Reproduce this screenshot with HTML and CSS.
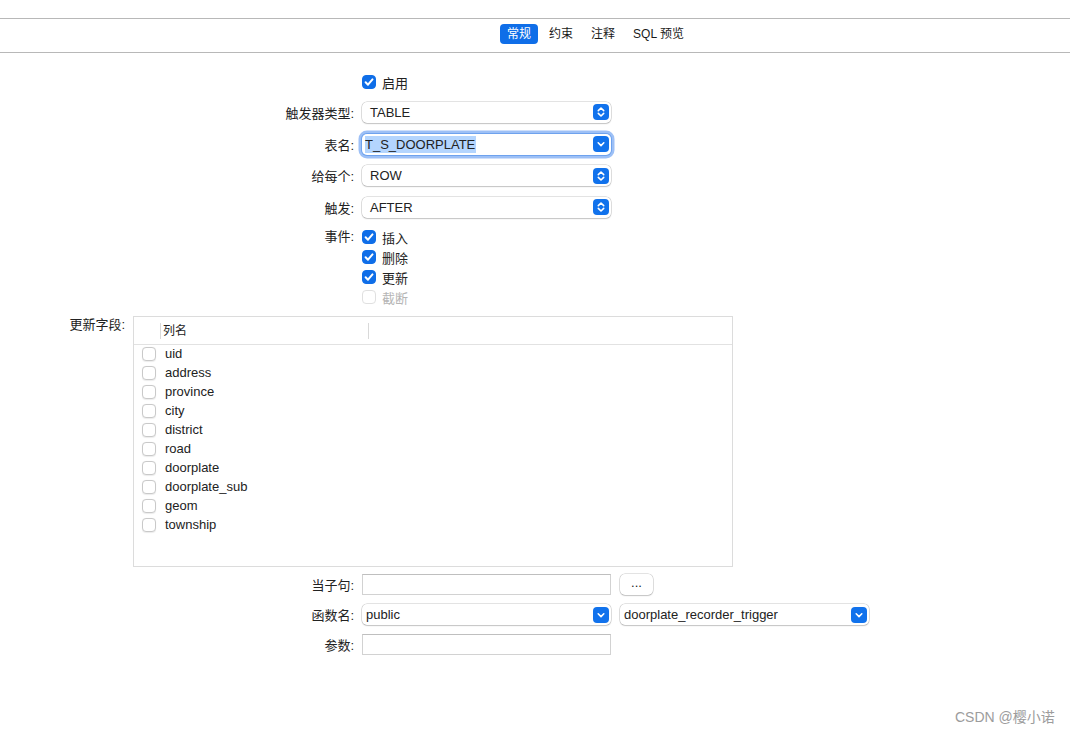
FILE: index.html
```html
<!DOCTYPE html>
<html lang="zh-CN">
<head>
<meta charset="utf-8">
<title>触发器</title>
<link rel="stylesheet" href="styles.css">
</head>
<body>
<div class="tabbar">
  <div class="tab active">常规</div>
  <div class="tab">约束</div>
  <div class="tab">注释</div>
  <div class="tab">SQL 预览</div>
</div>

<div class="form">
  <div class="row row-check">
    <div class="lbl"></div>
    <label class="cb"><span class="box on"><svg viewBox="0 0 14 14"><path d="M3.6 7.3 L6 9.7 L10.5 4.4"/></svg></span><span>启用</span></label>
  </div>

  <div class="row">
    <div class="lbl">触发器类型:</div>
    <div class="select"><span class="val">TABLE</span><span class="btn"><svg viewBox="0 0 16 16"><path d="M5.3 6.6 L8 4 L10.7 6.6 M5.3 9.4 L8 12 L10.7 9.4"/></svg></span></div>
  </div>

  <div class="row">
    <div class="lbl">表名:</div>
    <div class="select combo focus"><span class="val"><span class="sel">T_S_DOORPLATE</span></span><span class="btn"><svg viewBox="0 0 16 16"><path d="M5.2 6.8 L8 9.6 L10.8 6.8"/></svg></span></div>
  </div>

  <div class="row row-short">
    <div class="lbl">给每个:</div>
    <div class="select"><span class="val">ROW</span><span class="btn"><svg viewBox="0 0 16 16"><path d="M5.3 6.6 L8 4 L10.7 6.6 M5.3 9.4 L8 12 L10.7 9.4"/></svg></span></div>
  </div>

  <div class="row">
    <div class="lbl">触发:</div>
    <div class="select"><span class="val">AFTER</span><span class="btn"><svg viewBox="0 0 16 16"><path d="M5.3 6.6 L8 4 L10.7 6.6 M5.3 9.4 L8 12 L10.7 9.4"/></svg></span></div>
  </div>

  <div class="events">
    <div class="lbl lbl-top">事件:</div>
    <div class="checks">
      <label class="cb"><span class="box on"><svg viewBox="0 0 14 14"><path d="M3.6 7.3 L6 9.7 L10.5 4.4"/></svg></span><span>插入</span></label>
      <label class="cb"><span class="box on"><svg viewBox="0 0 14 14"><path d="M3.6 7.3 L6 9.7 L10.5 4.4"/></svg></span><span>删除</span></label>
      <label class="cb"><span class="box on"><svg viewBox="0 0 14 14"><path d="M3.6 7.3 L6 9.7 L10.5 4.4"/></svg></span><span>更新</span></label>
      <label class="cb disabled"><span class="box"></span><span>截断</span></label>
    </div>
  </div>

  <div class="fields">
    <div class="lbl-fields">更新字段:</div>
    <div class="table">
      <div class="thead">
        <div class="th-check"></div>
        <div class="th-name">列名</div>
      </div>
      <div class="tbody">
        <div class="trow"><span class="box"></span><span>uid</span></div>
        <div class="trow"><span class="box"></span><span>address</span></div>
        <div class="trow"><span class="box"></span><span>province</span></div>
        <div class="trow"><span class="box"></span><span>city</span></div>
        <div class="trow"><span class="box"></span><span>district</span></div>
        <div class="trow"><span class="box"></span><span>road</span></div>
        <div class="trow"><span class="box"></span><span>doorplate</span></div>
        <div class="trow"><span class="box"></span><span>doorplate_sub</span></div>
        <div class="trow"><span class="box"></span><span>geom</span></div>
        <div class="trow"><span class="box"></span><span>township</span></div>
      </div>
    </div>
  </div>

  <div class="brow first">
    <div class="lbl">当子句:</div>
    <div class="input"></div>
    <div class="dots">...</div>
  </div>

  <div class="brow">
    <div class="lbl">函数名:</div>
    <div class="select combo"><span class="val">public</span><span class="btn"><svg viewBox="0 0 16 16"><path d="M5.2 6.8 L8 9.6 L10.8 6.8"/></svg></span></div>
    <div class="select combo second"><span class="val">doorplate_recorder_trigger</span><span class="btn"><svg viewBox="0 0 16 16"><path d="M5.2 6.8 L8 9.6 L10.8 6.8"/></svg></span></div>
  </div>

  <div class="brow">
    <div class="lbl">参数:</div>
    <div class="input"></div>
  </div>
</div>

<div class="watermark">CSDN @樱小诺</div>
</body>
</html>
```

FILE: styles.css
```css
* { box-sizing: border-box; }

body {
  margin: 0;
  width: 1070px;
  height: 733px;
  position: relative;
  overflow: hidden;
  background: #fff;
  font-family: "Liberation Sans", "Noto Sans CJK SC", sans-serif;
  font-size: 13px;
  color: #222;
}

/* tab bar */
.tabbar {
  margin-top: 18px;
  height: 35px;
  border-top: 1px solid #b8b8b8;
  border-bottom: 1px solid #b8b8b8;
  display: flex;
  align-items: flex-start;
  gap: 4px;
  padding: 5px 0 0 500px;
}
.tab {
  height: 20px;
  line-height: 20px;
  padding: 0 7px;
  font-size: 12px;
  border-radius: 4px;
  color: #1a1a1a;
}
.tab.active {
  background: #0f6ee8;
  color: #fff;
}

/* form */
.form {
  display: flex;
  flex-direction: column;
  padding-top: 19px;
}
.row {
  display: flex;
  align-items: center;
  height: 32px;
}
.row-short { height: 31px; }
.row-check {
  height: 20px;
  margin-bottom: 4px;
}
.lbl {
  width: 354px;
  margin-right: 8px;
  text-align: right;
  white-space: nowrap;
  flex: none;
}
.lbl-top { line-height: 20px; }

/* checkboxes */
.cb {
  display: flex;
  align-items: center;
  gap: 6px;
  height: 20px;
}
.box {
  width: 14px;
  height: 14px;
  border-radius: 4px;
  background: #fff;
  border: 1px solid #c9c9c9;
  box-shadow: 0 0.5px 1px rgba(0,0,0,0.08);
  flex: none;
  display: flex;
}
.box.on {
  background: #0f6ee8;
  border-color: #0f6ee8;
  box-shadow: none;
}
.box svg {
  width: 14px;
  height: 14px;
  margin: -1px;
}
.box svg path {
  fill: none;
  stroke: #fff;
  stroke-width: 2;
  stroke-linecap: round;
  stroke-linejoin: round;
}
.cb.disabled { color: #b5b5b5; }
.cb.disabled .box { border-color: #e0e0e0; box-shadow: none; }

/* selects */
.select {
  width: 249px;
  height: 21px;
  flex: none;
  border-radius: 5px;
  background: #fff;
  box-shadow: 0 0 0 0.5px rgba(0,0,0,0.22), 0 1px 1.5px rgba(0,0,0,0.14);
  display: flex;
  align-items: center;
  justify-content: space-between;
  padding: 0 2px 0 8px;
}
.select.combo { padding-left: 4px; }
.select.focus {
  box-shadow: 0 0 0 1px #6ea2ee, 0 0 0 3.5px rgba(76,140,238,0.55);
}
.val { white-space: nowrap; }
.sel {
  background: #b4d5fe;
  padding: 1px 1px 1px 0;
  margin-left: -1px;
}
.btn {
  width: 16px;
  height: 16px;
  border-radius: 4px;
  background: #1172ec;
  display: flex;
}
.btn svg { width: 16px; height: 16px; }
.btn svg path {
  fill: none;
  stroke: #fff;
  stroke-width: 1.6;
  stroke-linecap: round;
  stroke-linejoin: round;
}

/* events */
.events {
  display: flex;
  margin-top: 4px;
}
.checks {
  display: flex;
  flex-direction: column;
}

/* fields table */
.fields {
  display: flex;
  margin-top: 9px;
}
.lbl-fields {
  width: 125px;
  margin-right: 8px;
  text-align: right;
  line-height: 17px;
  flex: none;
}
.table {
  width: 600px;
  height: 251px;
  border: 1px solid #dcdcdc;
}
.thead {
  height: 28px;
  border-bottom: 1px solid #e2e2e2;
  display: flex;
  align-items: center;
}
.th-check {
  width: 27px;
  height: 16px;
  border-right: 1px solid #d9d9d9;
}
.th-name {
  width: 208px;
  height: 16px;
  line-height: 16px;
  padding-left: 2px;
  font-size: 12px;
  border-right: 1px solid #d9d9d9;
}
.tbody { display: flex; flex-direction: column; margin-top: -1px; }
.trow {
  height: 19px;
  display: flex;
  align-items: center;
  gap: 9px;
  padding-left: 8px;
}

/* bottom rows */
.brow {
  display: flex;
  align-items: center;
  height: 21px;
  margin-top: 9px;
}
.brow.first { margin-top: 7px; }
.input {
  width: 249px;
  height: 21px;
  flex: none;
  background: #fff;
  border: 1px solid #d2d2d2;
  border-top-color: #bfbfbf;
}
.dots {
  margin-left: 9px;
  width: 33px;
  height: 21px;
  border-radius: 5px;
  box-shadow: 0 0 0 0.5px rgba(0,0,0,0.22), 0 1px 1.5px rgba(0,0,0,0.14);
  text-align: center;
  line-height: 17px;
}
.select.second { margin-left: 9px; }

.watermark {
  position: absolute;
  left: 955px;
  top: 708px;
  font-size: 14px;
  line-height: 18px;
  color: #9c9c9c;
  white-space: nowrap;
}
```
